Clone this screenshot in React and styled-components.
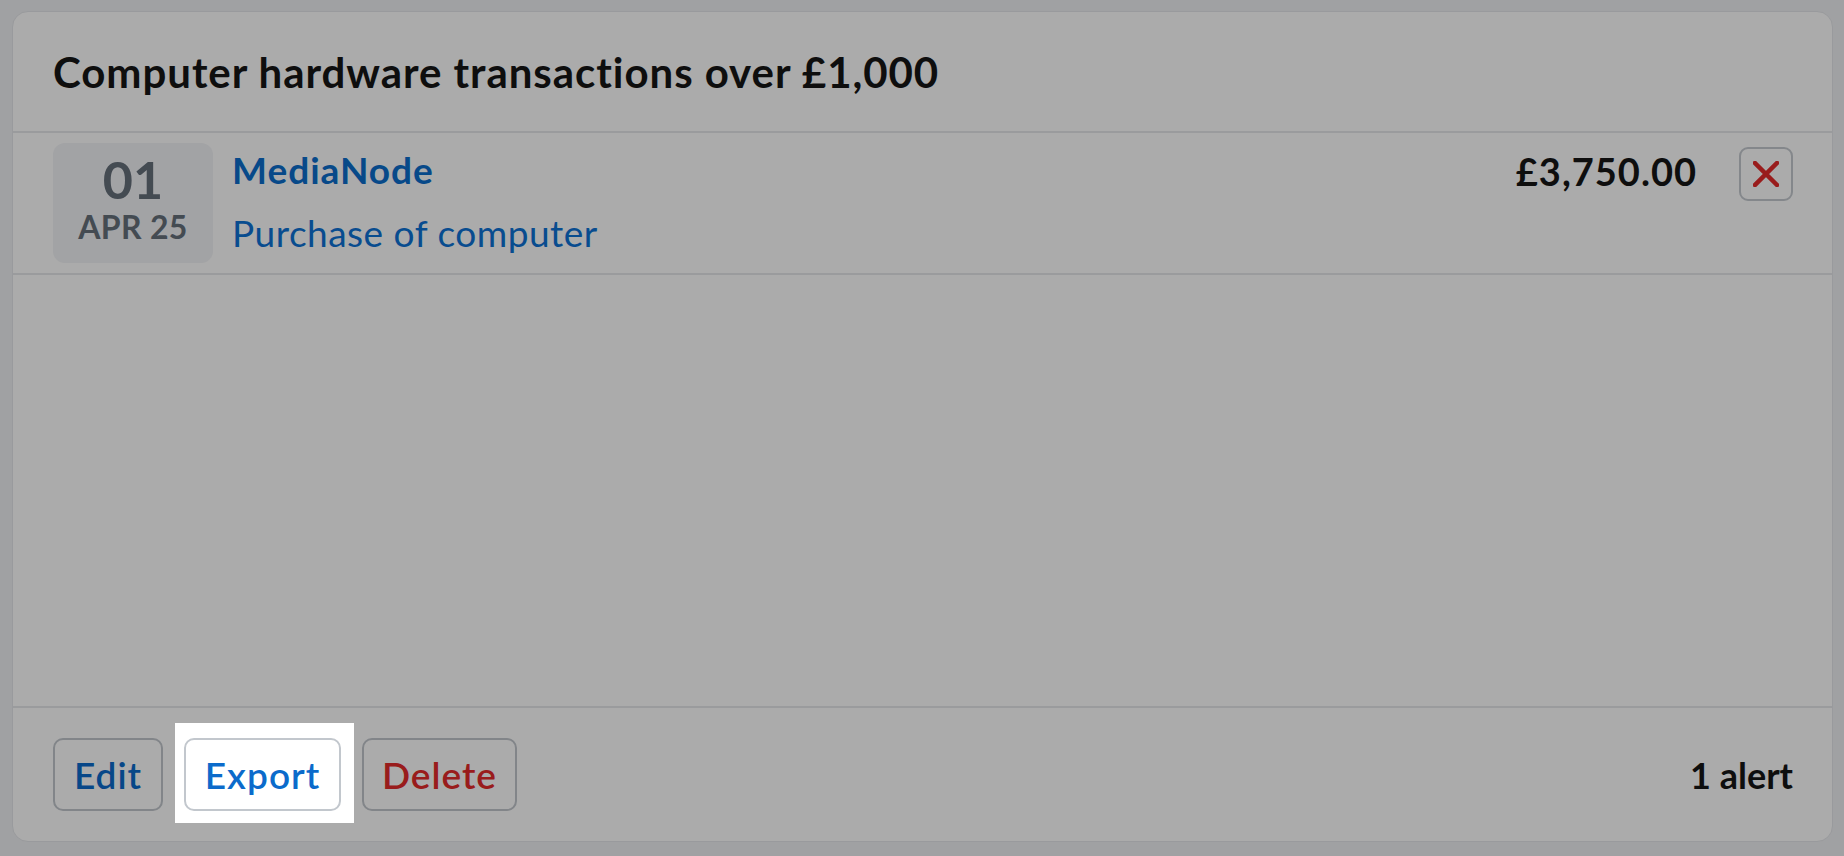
import React from "react";
import styled, { createGlobalStyle } from "styled-components";

const Global = createGlobalStyle`
  html, body { margin: 0; padding: 0; }
  body {
    background: #eff0f3;
    font-family: Lato, "Open Sans", sans-serif;
    color: #161616;
  }
  * { box-sizing: border-box; }
`;

const Page = styled.div`
  height: 856px;
  padding: 11px 11px 14px 12px;
  display: flex;
`;

const Card = styled.section`
  flex: 1;
  display: flex;
  flex-direction: column;
  background: #ffffff;
  border: 1px solid #e4e6ea;
  border-radius: 16px;
`;

const Header = styled.header`
  height: 121px;
  padding: 0 40px;
  display: flex;
  align-items: center;
  border-bottom: 2px solid #e6e7eb;
`;

const Title = styled.h1`
  margin: 0;
  font-size: 42px;
  font-weight: 700;
  color: #161616;
  letter-spacing: 0.95px;
`;

const Row = styled.div`
  display: flex;
  align-items: flex-start;
  padding: 10px 39px 10px 40px;
  border-bottom: 2px solid #e6e7eb;
`;

const DateBox = styled.div`
  width: 160px;
  height: 120px;
  padding-bottom: 10px;
  border-radius: 12px;
  background: #f2f3f6;
  color: #66707b;
  display: flex;
  flex-direction: column;
  align-items: center;
  justify-content: center;
  font-weight: 700;
`;

const Day = styled.div`
  font-size: 52px;
  line-height: 54px;
`;

const Month = styled.div`
  font-size: 32px;
  line-height: 36px;
  margin-top: 3px;
  letter-spacing: 0.3px;
`;

const Info = styled.div`
  flex: 1;
  display: flex;
  flex-direction: column;
  padding-left: 19px;
  padding-top: 7px;
  gap: 23px;
`;

const Merchant = styled.a`
  font-size: 37px;
  line-height: 40px;
  font-weight: 700;
  letter-spacing: 1px;
  color: #0b6ecd;
  text-decoration: none;
`;

const Description = styled.div`
  font-size: 37px;
  line-height: 40px;
  letter-spacing: 0.5px;
  color: #0d72d6;
`;

const Amount = styled.div`
  font-size: 38px;
  line-height: 40px;
  font-weight: 700;
  letter-spacing: 1px;
  color: #161616;
  padding-top: 8px;
  margin-right: 42px;
`;

const IconButton = styled.button`
  width: 54px;
  height: 54px;
  margin-top: 4px;
  border: 2px solid #c5cad0;
  border-radius: 9px;
  background: transparent;
  display: flex;
  align-items: center;
  justify-content: center;
  padding: 0;
  cursor: pointer;
`;

const Spacer = styled.div`
  flex: 1;
`;

const Footer = styled.footer`
  display: flex;
  align-items: center;
  gap: 21px;
  padding: 30px 39px 30px 40px;
  border-top: 2px solid #e6e7eb;
`;

const Button = styled.button`
  width: ${(p) => p.$w}px;
  height: 73px;
  padding: 0;
  border: 2px solid #c2c7cd;
  border-radius: 10px;
  background: #ffffff;
  font-family: inherit;
  font-size: 37px;
  font-weight: 600;
  letter-spacing: 1px;
  color: ${(p) => (p.$danger ? "#e42a2a" : "#0b6bcb")};
  cursor: pointer;
`;

const SpotlightWrap = styled.div`
  position: relative;
  display: flex;
`;

const Spotlight = styled.span`
  position: absolute;
  top: -15px;
  bottom: -12px;
  left: -9px;
  right: -13px;
  box-shadow: 0 0 0 4000px rgba(0, 0, 0, 0.33);
  pointer-events: none;
  z-index: 10;
`;

const AlertCount = styled.div`
  margin-left: auto;
  font-size: 36px;
  font-weight: 700;
  color: #161616;
`;

const CloseIcon = () => (
  <svg width="26" height="26" viewBox="0 0 26 26" aria-hidden="true">
    <path d="M2 2 L24 24 M24 2 L2 24" stroke="#e42a2a" strokeWidth="4.5" strokeLinecap="square" fill="none" />
  </svg>
);

export default function App() {
  return (
    <>
      <Global />
      <Page>
        <Card>
          <Header>
            <Title>Computer hardware transactions over £1,000</Title>
          </Header>
          <Row>
            <DateBox>
              <Day>01</Day>
              <Month>APR 25</Month>
            </DateBox>
            <Info>
              <Merchant href="#">MediaNode</Merchant>
              <Description>Purchase of computer</Description>
            </Info>
            <Amount>£3,750.00</Amount>
            <IconButton aria-label="Remove">
              <CloseIcon />
            </IconButton>
          </Row>
          <Spacer />
          <Footer>
            <Button $w={110}>Edit</Button>
            <SpotlightWrap>
              <Button $w={157}>Export</Button>
              <Spotlight />
            </SpotlightWrap>
            <Button $w={155} $danger>Delete</Button>
            <AlertCount>1 alert</AlertCount>
          </Footer>
        </Card>
      </Page>
    </>
  );
}
